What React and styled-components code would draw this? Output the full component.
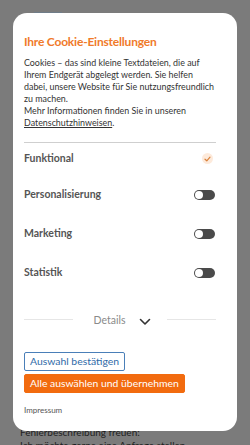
import React from 'react';
import styled, { createGlobalStyle } from 'styled-components';

const Global = createGlobalStyle`
  html, body { margin: 0; padding: 0; }
  body {
    width: 250px;
    height: 445px;
    overflow: hidden;
    background: #7b7b7b;
    font-family: Lato, "Open Sans", sans-serif;
  }
`;

const rows = [
  { label: 'Funktional', kind: 'check', h: 36 },
  { label: 'Personalisierung', kind: 'toggle', h: 39 },
  { label: 'Marketing', kind: 'toggle', h: 39 },
  { label: 'Statistik', kind: 'toggle', h: 39 },
];

export default () => {
  return (
    <Page>
      <Global />
      <Behind>
        <div className="behind__top" />
        <div className="behind__text">
          Fehlerbeschreibung freuen:
          <br />
          Ich möchte gerne eine Anfrage stellen
        </div>
      </Behind>
      <Modal>
        <Title>Ihre Cookie-Einstellungen</Title>
        <Intro>
          Cookies – das sind kleine Textdateien, die auf Ihrem Endgerät abgelegt werden. Sie helfen
          <br />
          dabei, unsere Website für Sie nutzungsfreundlich zu machen.
          <br />
          Mehr Informationen finden Sie in unseren <a href="#">Datenschutzhinweisen</a>.
        </Intro>
        <List>
          {rows.map((r) => (
            <Row key={r.label} $h={r.h}>
              <span>{r.label}</span>
              {r.kind === 'check' ? (
                <Check>
                  <svg width="7" height="6" viewBox="0 0 7 6">
                    <path d="M1 3.2 L2.8 4.8 L6 1.2" fill="none" stroke="#d9803a" strokeWidth="1.2" strokeLinecap="round" strokeLinejoin="round" />
                  </svg>
                </Check>
              ) : (
                <Toggle />
              )}
            </Row>
          ))}
        </List>
        <Details>
          <Line />
          <span>Details</span>
          <svg width="12" height="8" viewBox="0 0 12 8">
            <path d="M1.5 1.5 L6 6 L10.5 1.5" fill="none" stroke="#333" strokeWidth="1.6" strokeLinecap="round" strokeLinejoin="round" />
          </svg>
          <Line />
        </Details>
        <Actions>
          <Button>Auswahl bestätigen</Button>
          <Button $primary>Alle auswählen und übernehmen</Button>
        </Actions>
        <Imprint>Impressum</Imprint>
      </Modal>
    </Page>
  );
};

const Page = styled.div`
  position: relative;
  width: 250px;
  height: 445px;
  padding: 13px 13px 0;
  box-sizing: border-box;
`;

const Behind = styled.div`
  position: absolute;
  inset: 0;
  .behind__top {
    position: absolute;
    left: 34px;
    top: 12px;
    width: 28px;
    height: 2px;
    background: #6f7c88;
  }
  .behind__text {
    position: absolute;
    left: 20px;
    top: 426px;
    font-size: 10px;
    line-height: 13px;
    color: #1e1e1e;
  }
`;

const Modal = styled.div`
  position: relative;
  background: #fff;
  border-radius: 14px;
  height: 418px;
  box-sizing: border-box;
  padding: 21px 21px 0 11px;
  display: flex;
  flex-direction: column;
`;

const Title = styled.h1`
  margin: 0;
  font-size: 12px;
  letter-spacing: -0.2px;
  line-height: 15px;
  font-weight: 700;
  color: #f07a2a;
`;

const Intro = styled.p`
  margin: 8px -4px 0 0;
  font-size: 8.9px;
  line-height: 12px;
  color: #333;
  a {
    color: #333;
    text-decoration: underline;
  }
`;

const List = styled.div`
  margin-top: 13px;
  border-top: 1px solid #cfcfcf;
  display: flex;
  flex-direction: column;
  padding-top: 8px;
`;

const Row = styled.div`
  height: ${(p) => p.$h}px;
  display: flex;
  align-items: flex-start;
  justify-content: space-between;
  font-size: 10.5px;
  font-weight: 700;
  color: #555;
  span { line-height: 14px; }
`;

const Check = styled.div`
  width: 11px;
  height: 11px;
  margin-right: 3px;
  margin-top: 2px;
  border-radius: 50%;
  background: #fdeadb;
  display: flex;
  align-items: center;
  justify-content: center;
`;

const Toggle = styled.div`
  position: relative;
  width: 21px;
  height: 10px;
  margin-top: 3px;
  margin-right: 1px;
  border-radius: 5px;
  background: #4a4a4a;
  &::after {
    content: '';
    position: absolute;
    left: 1px;
    top: 1px;
    width: 8px;
    height: 8px;
    border-radius: 50%;
    background: #fff;
  }
`;

const Details = styled.div`
  margin-top: 9px;
  display: flex;
  align-items: center;
  font-size: 10.5px;
  color: #8a8a8a;
  span { margin: 0 14px 0 21px; }
  svg { margin-top: 5px; margin-right: 16px; }
`;

const Line = styled.div`
  flex: 1;
  height: 1px;
  background: #e6e6e6;
`;

const Actions = styled.div`
  margin-top: 26px;
  display: flex;
  flex-direction: column;
  align-items: flex-start;
  gap: 3px;
`;

const Button = styled.button`
  font-family: inherit;
  font-size: 10.4px;
  line-height: 13px;
  padding: 2px 5px;
  border-radius: 2px;
  border: 1px solid ${(p) => (p.$primary ? '#f26b0f' : '#4a7fb8')};
  background: ${(p) => (p.$primary ? '#f26b0f' : '#fff')};
  color: ${(p) => (p.$primary ? '#fff' : '#2f6aa8')};
  cursor: pointer;
`;

const Imprint = styled.div`
  margin-top: 12px;
  font-size: 8px;
  color: #555;
`;
